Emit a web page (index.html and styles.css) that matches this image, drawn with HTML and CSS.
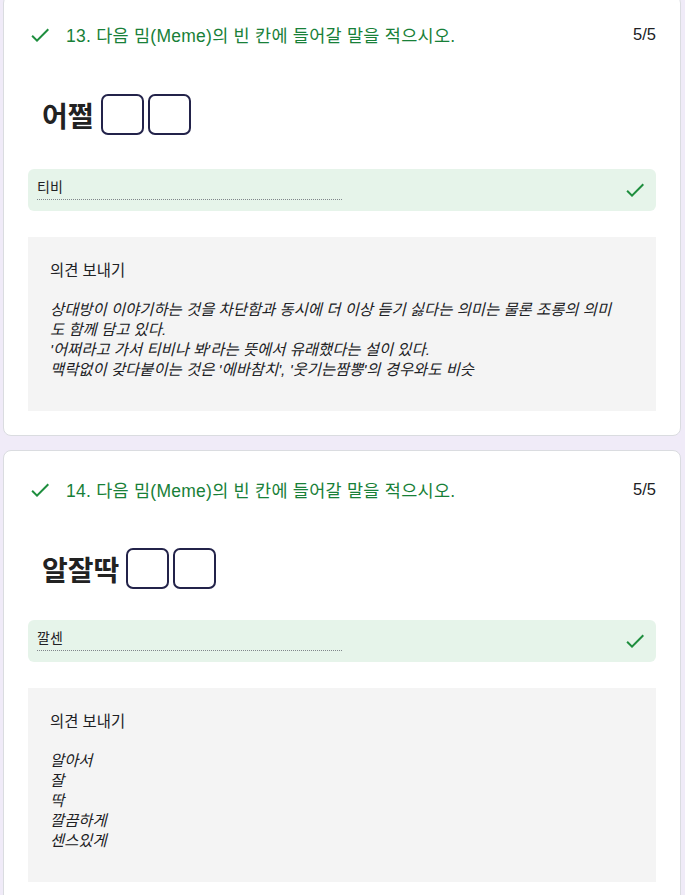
FILE: index.html
```html
<!DOCTYPE html>
<html lang="ko">
<head>
<meta charset="utf-8">
<title>퀴즈 결과</title>
<link rel="stylesheet" href="styles.css">
</head>
<body>
<div class="page">
  <div class="card">
    <div class="q-head">
      <svg class="ic" viewBox="0 0 24 24" width="24" height="24"><path fill="#1e8e3e" d="M9 16.17L4.83 12l-1.42 1.41L9 19 21 7l-1.41-1.41z"/></svg>
      <div class="q-title">13. 다음 밈(Meme)의 빈 칸에 들어갈 말을 적으시오.</div>
      <div class="q-score">5/5</div>
    </div>
    <div class="meme meme-a">
      <span class="meme-word">어쩔</span>
      <span class="meme-box"></span>
      <span class="meme-box"></span>
    </div>
    <div class="answer">
      <div class="answer-field">티비</div>
      <svg class="ic ic-ok" viewBox="0 0 24 24" width="24" height="24"><path fill="#1e8e3e" d="M9 16.17L4.83 12l-1.42 1.41L9 19 21 7l-1.41-1.41z"/></svg>
    </div>
    <div class="feedback">
      <div class="fb-label">의견 보내기</div>
      <div class="fb-text">상대방이 이야기하는 것을 차단함과 동시에 더 이상 듣기 싫다는 의미는 물론 조롱의 의미<br>도 함께 담고 있다.<br>'어쩌라고 가서 티비나 봐'라는 뜻에서 유래했다는 설이 있다.<br>맥락없이 갖다붙이는 것은 '에바참치', '웃기는짬뽕'의 경우와도 비슷</div>
    </div>
  </div>

  <div class="card">
    <div class="q-head">
      <svg class="ic" viewBox="0 0 24 24" width="24" height="24"><path fill="#1e8e3e" d="M9 16.17L4.83 12l-1.42 1.41L9 19 21 7l-1.41-1.41z"/></svg>
      <div class="q-title">14. 다음 밈(Meme)의 빈 칸에 들어갈 말을 적으시오.</div>
      <div class="q-score">5/5</div>
    </div>
    <div class="meme meme-b">
      <span class="meme-word">알잘딱</span>
      <span class="meme-box"></span>
      <span class="meme-box"></span>
    </div>
    <div class="answer">
      <div class="answer-field">깔센</div>
      <svg class="ic ic-ok" viewBox="0 0 24 24" width="24" height="24"><path fill="#1e8e3e" d="M9 16.17L4.83 12l-1.42 1.41L9 19 21 7l-1.41-1.41z"/></svg>
    </div>
    <div class="feedback">
      <div class="fb-label">의견 보내기</div>
      <div class="fb-text">알아서<br>잘<br>딱<br>깔끔하게<br>센스있게</div>
    </div>
  </div>
</div>
</body>
</html>
```

FILE: styles.css
```css
html, body {
  margin: 0;
  padding: 0;
}
body {
  background: #f0ebf8;
  font-family: "Liberation Sans", "Noto Sans CJK KR", sans-serif;
  color: #202124;
  overflow: hidden;
}
.page {
  display: flex;
  flex-direction: column;
  gap: 14px;
  margin-top: -5px;
  padding: 0 4px 0 3px;
}
.card {
  background: #fff;
  border: 1px solid #dadce0;
  border-radius: 8px;
  padding: 24px;
}
.q-head {
  display: flex;
  align-items: center;
  height: 29px;
}
.ic {
  display: block;
  flex: none;
  width: 24px;
  height: 24px;
}
.q-title {
  flex: 1;
  margin-left: 14px;
  font-size: 17.5px;
  letter-spacing: 0.25px;
  color: #188038;
  white-space: nowrap;
}
.q-score {
  font-size: 16.5px;
  color: #202124;
}
.meme {
  display: flex;
  align-items: center;
  padding-left: 14px;
}
.meme-a {
  padding-top: 45px;
  padding-bottom: 34px;
}
.meme-b {
  padding-top: 44px;
  padding-bottom: 31px;
}
.meme-word {
  font-family: "Noto Sans CJK KR", sans-serif;
  font-weight: 700;
  font-size: 28px;
  line-height: 30px;
  color: #222;
}
.meme-a .meme-word {
  margin-right: 7px;
}
.meme-b .meme-word {
  margin-right: 7px;
}
.meme-box {
  box-sizing: border-box;
  width: 43px;
  height: 41px;
  border: 2px solid #23234a;
  border-radius: 7px;
}
.meme-box + .meme-box {
  margin-left: 4px;
}
.answer {
  display: flex;
  align-items: flex-start;
  height: 42px;
  box-sizing: border-box;
  padding: 0 9px;
  background: #e6f4ea;
  border-radius: 6px;
  margin-bottom: 26px;
}
.answer-field {
  width: 305px;
  margin-top: 8px;
  font-size: 14px;
  line-height: 20px;
  padding-bottom: 2px;
  border-bottom: 1px dotted #80868b;
  color: #202124;
}
.ic-ok {
  margin-left: auto;
  align-self: center;
}
.feedback {
  background: #f4f4f4;
  padding: 24px 22px 31px;
  font-size: 15.4px;
  line-height: 20px;
  color: #202124;
}
.fb-label {
  margin-bottom: 19px;
}
.fb-text {
  font-style: italic;
  white-space: nowrap;
}
```
